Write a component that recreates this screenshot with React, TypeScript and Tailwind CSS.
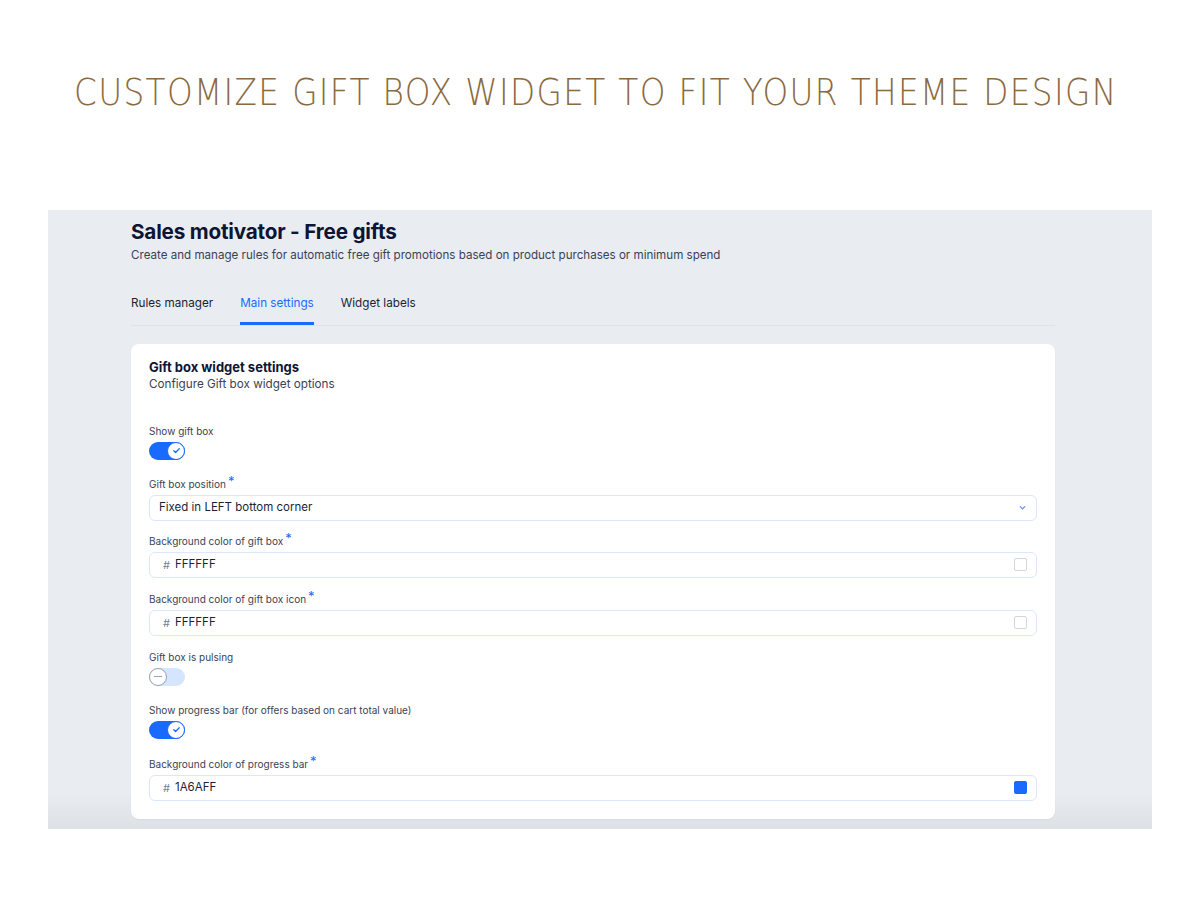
import React from "react";

function Toggle({ on }: { on: boolean }) {
  return (
    <div
      className={`mt-[4px] flex h-[18px] w-[36px] items-center rounded-full ${
        on ? "bg-[#1a6aff] justify-end" : "bg-[#d5e5fe] justify-start"
      }`}
    >
      <div
        className={`flex h-[18px] w-[18px] items-center justify-center rounded-full bg-white ${
          on ? "border-[1.5px] border-[#1a6aff]" : "border border-[#9aa0ae]"
        }`}
      >
        {on ? (
          <svg width="9" height="9" viewBox="0 0 10 10" fill="none">
            <path d="M2 5.2l2 2L8 3" stroke="#1a6aff" strokeWidth="1.4" strokeLinecap="round" strokeLinejoin="round" />
          </svg>
        ) : (
          <div className="h-[1px] w-[8px] bg-[#9aa0ae]" />
        )}
      </div>
    </div>
  );
}

function Label({ text, required }: { text: string; required?: boolean }) {
  return (
    <div className="flex items-start text-[10px] leading-[14px] text-[#3b3f55]">
      <span>{text}</span>
      {required && <span className="ml-[2px] -mt-[3px] text-[13px] leading-[14px] text-[#1a6aff]">*</span>}
    </div>
  );
}

function ColorInput({ value, swatch }: { value: string; swatch?: string }) {
  return (
    <div className="mt-[4px] flex h-[26px] items-center rounded-[6px] border border-[#dae7fc] bg-white pl-[13px] pr-[9px]">
      <span className="text-[11px] text-[#7a7f90]">#</span>
      <span className="ml-[5px] text-[11.5px] text-[#1b1f35]">{value}</span>
      <div
        className={`ml-auto h-[13px] w-[13px] rounded-[2px] ${
          swatch ? "" : "border border-[#d4d6dc] bg-white"
        }`}
        style={swatch ? { backgroundColor: swatch } : undefined}
      />
    </div>
  );
}

export default function App() {
  return (
    <div className="min-h-[900px] overflow-hidden bg-white font-['Inter',sans-serif]">
      <div className="flex justify-center whitespace-nowrap pr-[8px] pt-[64px]">
        <span className="inline-block shrink-0 origin-center scale-x-[0.86] font-['DejaVu_Sans',sans-serif] text-[38px] font-extralight tracking-[1.6px] text-[#8b6a42]">
          CUSTOMIZE GIFT BOX WIDGET TO FIT YOUR THEME DESIGN
        </span>
      </div>

      <div className="mx-[48px] mt-[89px] bg-gradient-to-b from-[#e9edf1] from-[94%] to-[#dde1e5] pb-[10px] pl-[83px] pr-[97px] pt-[8px]">
        <div className="text-[20.7px] font-bold leading-[28px] tracking-[-0.2px] text-[#0e1433]">
          Sales motivator - Free gifts
        </div>
        <div className="mt-[1px] text-[11.6px] text-[#3b3f55]">
          Create and manage rules for automatic free gift promotions based on product purchases or minimum spend
        </div>

        <div className="mt-[31px] flex gap-[27px] border-b border-[#dfe3e8] text-[11.7px] text-[#1b1f35]">
          <div className="pb-[12px]">Rules manager</div>
          <div className="border-b-[3px] border-[#1a6aff] pb-[9px] text-[#1a6aff]">Main settings</div>
          <div className="pb-[12px]">Widget labels</div>
        </div>

        <div className="mt-[18px] rounded-[8px] bg-white px-[18px] pb-[18px] pt-[14px] shadow-[0_1px_2px_rgba(0,0,0,0.04)]">
          <div className="text-[13px] font-bold leading-[18px] text-[#0e1433]">Gift box widget settings</div>
          <div className="text-[11.7px] leading-[16px] text-[#3b3f55]">Configure Gift box widget options</div>

          <div className="mt-[32px]">
            <Label text="Show gift box" />
            <Toggle on />
          </div>

          <div className="mt-[17px]">
            <Label text="Gift box position" required />
            <div className="mt-[4px] flex h-[26px] items-center rounded-[6px] border border-[#dae7fc] bg-white pl-[9px] pr-[9px]">
              <span className="text-[11.5px] text-[#1b1f35]">Fixed in LEFT bottom corner</span>
              <svg className="ml-auto" width="9" height="9" viewBox="0 0 10 10" fill="none">
                <path d="M2.5 4l2.5 2.5L7.5 4" stroke="#5a8fff" strokeWidth="1.3" strokeLinecap="round" />
              </svg>
            </div>
          </div>

          <div className="mt-[13px]">
            <Label text="Background color of gift box" required />
            <ColorInput value="FFFFFF" />
          </div>

          <div className="mt-[14px]">
            <Label text="Background color of gift box icon" required />
            <ColorInput value="FFFFFF" />
          </div>

          <div className="mt-[14px]">
            <Label text="Gift box is pulsing" />
            <Toggle on={false} />
          </div>

          <div className="mt-[17px]">
            <Label text="Show progress bar (for offers based on cart total value)" />
            <Toggle on />
          </div>

          <div className="mt-[18px]">
            <Label text="Background color of progress bar" required />
            <ColorInput value="1A6AFF" swatch="#1a6aff" />
          </div>
        </div>
      </div>
    </div>
  );
}
